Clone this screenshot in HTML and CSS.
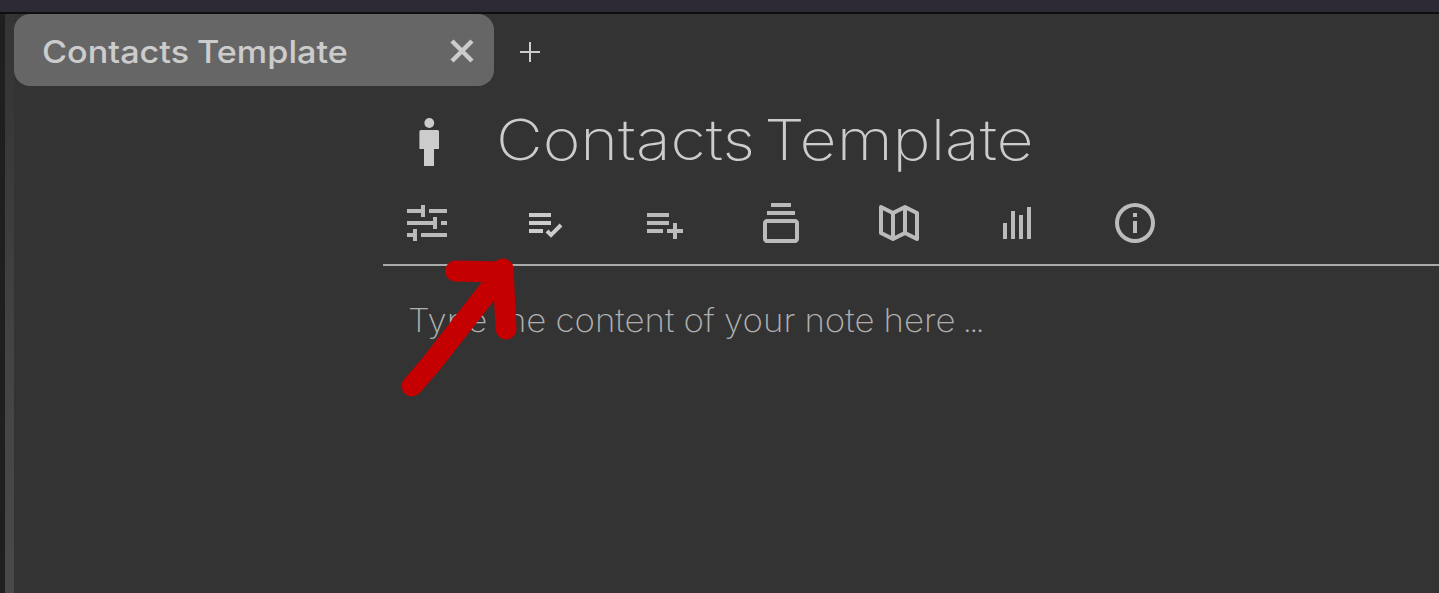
FILE: index.html
```html
<!DOCTYPE html>
<html lang="en">
<head>
<meta charset="utf-8">
<title>Contacts Template</title>
<link rel="stylesheet" href="styles.css">
</head>
<body>
<div class="titlebar"></div>
<div class="app">
  <div class="edge"></div>
  <div class="gutter"></div>
  <main class="workspace">
    <div class="tabs">
      <div class="tab">
        <span class="tab-title">Contacts Template</span>
        <svg class="tab-close" viewBox="0 0 24 24"><path d="M2 2 22 22M22 2 2 22"/></svg>
      </div>
      <svg class="tab-add" viewBox="0 0 20 20"><path d="M10 0v20M0 10h20"/></svg>
    </div>
    <section class="note">
      <header class="note-header">
        <svg class="note-icon" viewBox="0 0 20 48"><circle cx="10.300" cy="5" r="4.9"/><path d="M1.900 12h16.600a1.500 1.500 0 0 1 1.500 1.500V31H15v17H5V31H.4V13.500A1.500 1.500 0 0 1 1.900 12z"/></svg>
        <h1 class="note-title">Contacts Template</h1>
      </header>
      <nav class="ribbon">
        <svg class="icon" viewBox="0 0 24 24"><path d="M2 5h7V3h2v6H9V7H2zM13 5h9v2h-9zM2 11h13V9h2v6h-2v-2H2zM19 11h3v2h-3zM2 17h3v-2h2v6H5v-2H2zM9 17h13v2H9z"/></svg>
        <svg class="icon icon-bright" viewBox="0 0 24 24"><path d="M4 7h11v2H4zM4 11h11v2H4zM4 15h7v2H4zM19.300 12.290l-4.300 4.290-1.290-1.290-1.420 1.420L15 19.410l5.710-5.700z"/></svg>
        <svg class="icon" viewBox="0 0 24 24"><path d="M19 15v-3h-2v3h-3v2h3v3h2v-3h3v-2zM4 7h11v2H4zM4 11h11v2H4zM4 15h8v2H4z"/></svg>
        <svg class="icon" viewBox="0 0 24 24"><path d="M19 10H5c-1.100 0-2 .9-2 2v8c0 1.100.9 2 2 2h14c1.100 0 2-.9 2-2v-8c0-1.100-.9-2-2-2zM5 20v-8h14v8zM5 6h14v2H5zM7 2h10v2H7z"/></svg>
        <svg class="icon" viewBox="0 0 24 24"><path d="M21.447 6.105l-6-3a1 1 0 0 0-.895 0L9 5.882 3.447 3.105A1 1 0 0 0 2 4v13c0 .379.214.725.553.895l6 3a1 1 0 0 0 .895 0L15 18.118l5.553 2.776a1 1 0 0 0 .972-.043c.295-.183.475-.504.475-.851V7c0-.379-.214-.725-.553-.895zM10 7.618l4-2v10.764l-4 2zM4 5.618l4 2v10.764l-4-2zM20 18.382l-4-2V5.618l4 2z"/></svg>
        <svg class="icon" viewBox="0 0 24 24"><path d="M5 12h2v8H5zM9 6h2v14H9zM13 8h2v12h-2zM17 4h2v16h-2z"/></svg>
        <svg class="icon" viewBox="0 0 24 24"><path fill-rule="evenodd" d="M12 2a10 10 0 1 0 0 20 10 10 0 0 0 0-20zm0 18a8 8 0 1 1 0-16 8 8 0 0 1 0 16zM11 7h2v2h-2zM11 11h2v6h-2z"/></svg>
      </nav>
      <p class="placeholder">Type the content of your note here <span class="dots">...</span></p>
    </section>
  </main>
</div>
<svg class="arrow" viewBox="400 258 120 142"><path d="M412 386 431 364 503 272M455.500 271 503 272M503 269 506 329"/></svg>
</body>
</html>
```
FILE: styles.css
```css
body {
  margin: 0;
  height: 593px;
  display: flex;
  flex-direction: column;
  overflow: hidden;
  background: #333;
  color: #ccc;
  font-family: Inter, Roboto, sans-serif;
}
.titlebar {
  box-sizing: border-box;
  height: 14px;
  flex: none;
  background: #2d2a36;
  border-bottom: 2px solid #0e0e0f;
}
.app { display: flex; flex: 1; }
.edge { width: 5px; background: #1f1f1f; }
.gutter { width: 9px; background: linear-gradient(#353535, #373737 15%, #444 60%, #494949); }
.workspace { flex: 1; min-width: 0; }
.tabs { display: flex; align-items: center; height: 72px; gap: 25.500px; }
.tab {
  box-sizing: border-box;
  display: flex;
  align-items: center;
  justify-content: space-between;
  width: 480px;
  height: 72px;
  padding: 0 20px 0 28px;
  border-radius: 16px;
  background: #666;
}
.tab-title {
  margin-top: 4px;
  font-size: 31.500px;
  font-weight: 450;
  line-height: 40px;
  word-spacing: -1px;
  white-space: nowrap;
  transform: scaleX(1.086);
  transform-origin: left;
}
.tab-close { width: 24px; height: 24px; fill: none; stroke: #ccc; stroke-width: 4.500; margin-top: 1px; }
.tab-add { width: 20px; height: 20px; margin-top: 4px; fill: none; stroke: #ccc; stroke-width: 2; }
.note { margin-left: 369px; }
.note-header {
  display: flex;
  align-items: center;
  height: 89px;
  padding-left: 36px;
  gap: 57.300px;
}
.note-icon { width: 20px; height: 48px; margin-top: 23px; fill: #ccc; }
.note-title {
  margin: 18px 0 0;
  font-size: 56px;
  font-weight: 250;
  line-height: 68px;
  word-spacing: -7.500px;
  white-space: nowrap;
  transform: scaleX(1.149);
  transform-origin: left;
}
.ribbon {
  box-sizing: border-box;
  display: flex;
  gap: 70px;
  height: 91px;
  padding: 24px 0 0 19.600px;
  border-bottom: 2px solid #aaa;
}
.icon { flex: none; width: 48px; height: 48px; fill: #bbb; }
.icon-bright { fill: #ccc; }
.placeholder {
  margin: 35px 0 0 25px;
  font-size: 32px;
  font-weight: 220;
  line-height: 40px;
  color: #b0b0b0;
  white-space: nowrap;
  word-spacing: -.6px;
  transform: scaleX(1.088);
  transform-origin: left;
  width: max-content;
}
.dots { letter-spacing: -2.900px; margin-left: -2px; }
.arrow {
  position: absolute;
  left: 400px;
  top: 258px;
  width: 120px;
  height: 142px;
  fill: none;
  stroke: #c40000;
  stroke-width: 21;
  stroke-linecap: round;
  stroke-linejoin: round;
}
```
